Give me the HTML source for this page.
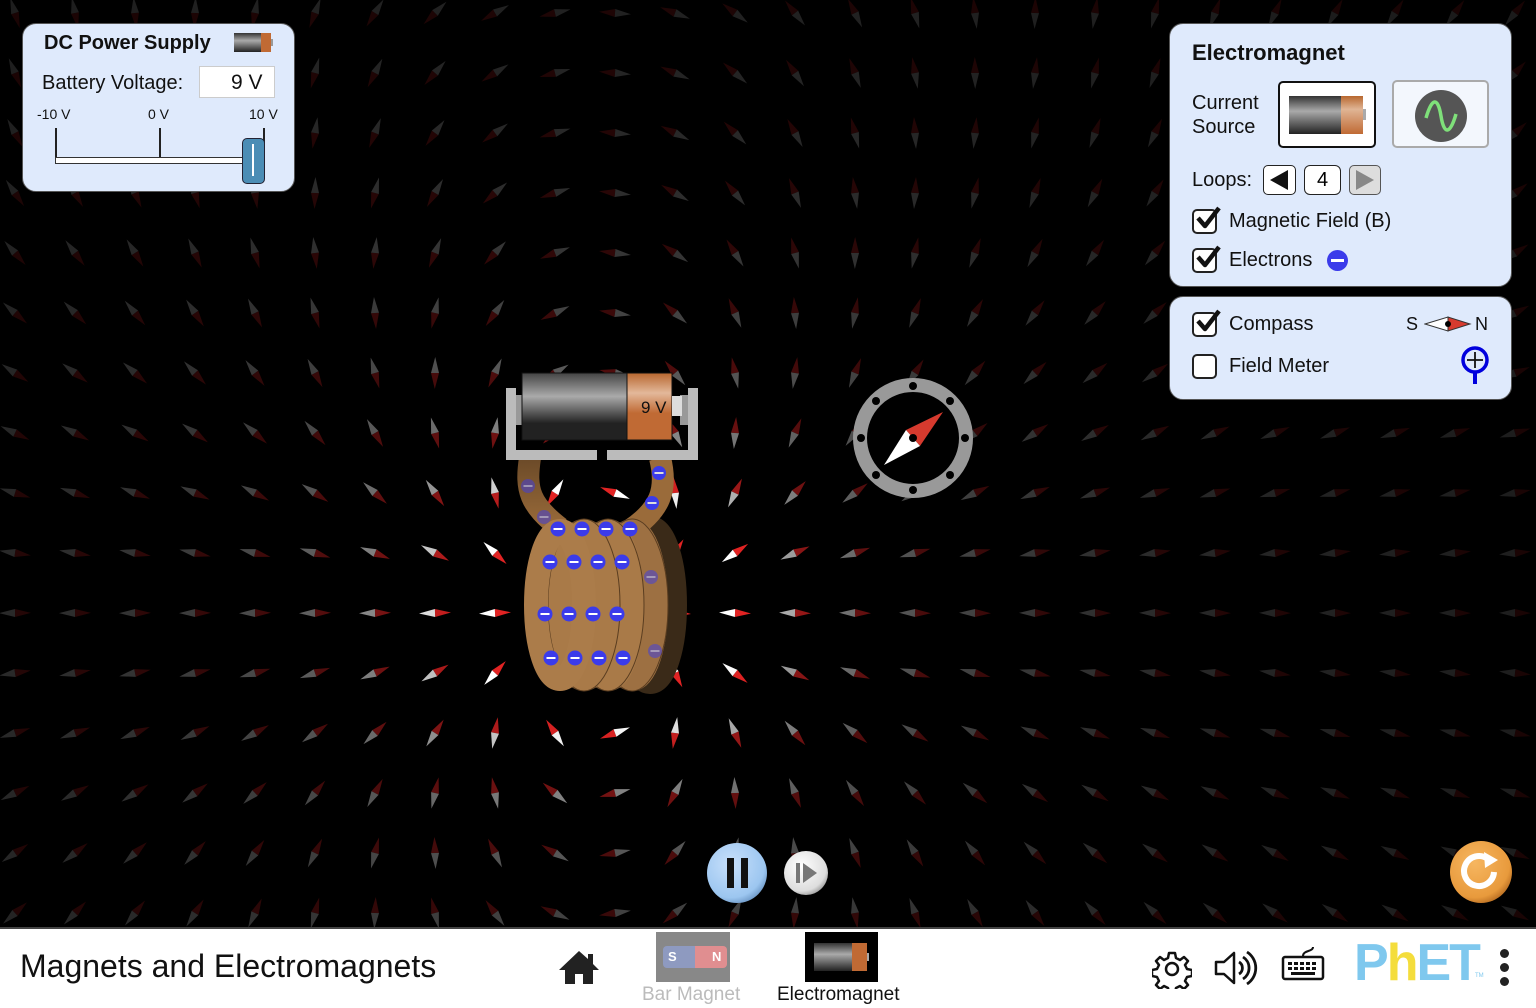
<!DOCTYPE html>
<html><head><meta charset="utf-8">
<style>
*{margin:0;padding:0;box-sizing:border-box}
body{width:1536px;height:1008px;overflow:hidden;background:#000;font-family:"Liberation Sans",Arial,sans-serif;position:relative}
.panel{position:absolute;background:#dfeafc;border:1.5px solid #555;border-radius:14px}
.t{position:absolute;color:#111;white-space:nowrap}
.cb{position:absolute;width:25px;height:25px;border:2px solid #222;border-radius:5px;background:#fff}
.ck{position:absolute;width:30px;height:28px}
#bar{position:absolute;left:0;top:927px;width:1536px;height:81px;background:#fff;border-top:2px solid #444}
</style></head><body>
<svg id="field" width="1536" height="927" style="position:absolute;left:0;top:0"></svg>

<svg width="1536" height="927" style="position:absolute;left:0;top:0">
<defs>
<linearGradient id="bat" x1="0" y1="0" x2="0" y2="1"><stop offset="0" stop-color="#444"/><stop offset=".35" stop-color="#aaa"/><stop offset=".75" stop-color="#222"/><stop offset="1" stop-color="#222"/></linearGradient>
<linearGradient id="org" x1="0" y1="0" x2="0" y2="1"><stop offset="0" stop-color="#b8672f"/><stop offset=".3" stop-color="#e3b89a"/><stop offset=".6" stop-color="#c06a34"/><stop offset="1" stop-color="#c06a34"/></linearGradient>
<linearGradient id="lead" x1="0" y1="0" x2="0" y2="1"><stop offset="0" stop-color="#6b4a28"/><stop offset="1" stop-color="#9a6b3a"/></linearGradient>
</defs>
<ellipse cx="650" cy="605" rx="24" ry="76" fill="none" stroke="#3a2a18" stroke-width="26"/>
<path d="M530 458 C525 490 530 505 560 528" fill="none" stroke="url(#lead)" stroke-width="22"/>
<path d="M660 458 C668 490 660 510 630 530" fill="none" stroke="#9a6b3a" stroke-width="22"/>
<g stroke-width="24" fill="none">
<ellipse cx="632" cy="605" rx="24" ry="74" stroke="#9d7042"/>
<ellipse cx="632" cy="605" rx="36" ry="86" stroke="#5a3d20" stroke-width="1"/>
<ellipse cx="608" cy="605" rx="24" ry="74" stroke="#a97a48"/>
<ellipse cx="608" cy="605" rx="36" ry="86" stroke="#5a3d20" stroke-width="1"/>
<ellipse cx="584" cy="605" rx="24" ry="74" stroke="#a97a48"/>
<ellipse cx="584" cy="605" rx="36" ry="86" stroke="#5a3d20" stroke-width="1"/>
<ellipse cx="560" cy="605" rx="24" ry="74" stroke="#ab7c4a"/>
</g>
<path d="M506 388 h10 v62 h81 v10 h-91z M698 388 h-10 v62 h-81 v10 h91z" fill="#bbb"/>
<rect x="516" y="395" width="8" height="30" fill="#999"/>
<rect x="680" y="395" width="8" height="30" fill="#999"/>
<rect x="522" y="373" width="105" height="67" fill="url(#bat)" stroke="#111"/>
<rect x="627" y="373" width="45" height="67" fill="url(#org)" stroke="#111"/>
<rect x="672" y="396" width="10" height="20" fill="#ddd"/>
<text x="641" y="413" font-family="Liberation Sans" font-size="17" fill="#111">9 V</text>
<g id="el"></g>
<circle cx="913" cy="438" r="53" fill="none" stroke="#999" stroke-width="14"/>
<g fill="#000"><circle cx="913" cy="386" r="4"/><circle cx="913" cy="490" r="4"/><circle cx="861" cy="438" r="4"/><circle cx="965" cy="438" r="4"/><circle cx="876" cy="401" r="4"/><circle cx="950" cy="401" r="4"/><circle cx="876" cy="475" r="4"/><circle cx="950" cy="475" r="4"/></g>
<polygon points="943,412 906,430 920,446" fill="#d63a2e"/>
<polygon points="884,465 906,430 920,446" fill="#fff"/>
<circle cx="913" cy="438" r="4" fill="#000"/>
<defs><radialGradient id="pb" cx=".4" cy=".35" r=".7"><stop offset="0" stop-color="#c8e0fb"/><stop offset=".8" stop-color="#9cc6f0"/><stop offset="1" stop-color="#6a95c4"/></radialGradient>
<radialGradient id="sb" cx=".4" cy=".35" r=".7"><stop offset="0" stop-color="#fff"/><stop offset=".8" stop-color="#ddd"/><stop offset="1" stop-color="#999"/></radialGradient>
<radialGradient id="rb" cx=".4" cy=".35" r=".7"><stop offset="0" stop-color="#f6b660"/><stop offset=".8" stop-color="#e89a3c"/><stop offset="1" stop-color="#b56a20"/></radialGradient></defs>
<circle cx="737" cy="873" r="30" fill="url(#pb)"/>
<rect x="727" y="858" width="7" height="30" fill="#111"/><rect x="741" y="858" width="7" height="30" fill="#111"/>
<circle cx="806" cy="873" r="22" fill="url(#sb)"/>
<rect x="796" y="863" width="4" height="20" fill="#777"/><polygon points="803,863 817,873 803,883" fill="#777"/>
<circle cx="1481" cy="872" r="31" fill="url(#rb)"/>
<path d="M1488 859 A15 15 0 1 0 1494 872" fill="none" stroke="#fff" stroke-width="6"/>
<polygon points="1484,852 1498,860 1485,868" fill="#fff"/>
</svg>

<div class="panel" style="left:22px;top:23px;width:273px;height:169px">
<div class="t" style="left:21px;top:8px;font-size:20px;font-weight:bold">DC Power Supply</div>
<svg style="position:absolute;left:211px;top:9px" width="40" height="20"><defs><linearGradient id="b2" x1="0" y1="0" x2="0" y2="1"><stop offset="0" stop-color="#333"/><stop offset=".4" stop-color="#aaa"/><stop offset="1" stop-color="#222"/></linearGradient></defs><rect x="0" y="0" width="27" height="19" fill="url(#b2)"/><rect x="27" y="0" width="10" height="19" fill="#c06a34"/><rect x="37" y="6" width="2" height="7" fill="#999"/></svg>
<div class="t" style="left:19px;top:48px;font-size:20px">Battery Voltage:</div>
<div style="position:absolute;left:176px;top:42px;width:76px;height:32px;background:#fff;border:1px solid #ccc"></div>
<div class="t" style="left:208px;top:47px;font-size:21px">9 V</div>
<div class="t" style="left:14px;top:82px;font-size:14px">-10 V</div>
<div class="t" style="left:125px;top:82px;font-size:14px">0 V</div>
<div class="t" style="left:226px;top:82px;font-size:14px">10 V</div>
<div style="position:absolute;left:32px;top:104px;width:1.5px;height:34px;background:#222"></div>
<div style="position:absolute;left:136px;top:104px;width:1.5px;height:30px;background:#222"></div>
<div style="position:absolute;left:240px;top:104px;width:1.5px;height:30px;background:#222"></div>
<div style="position:absolute;left:32px;top:133px;width:196px;height:7px;background:#fff;border:1.5px solid #333"></div>
<div style="position:absolute;left:219px;top:114px;width:23px;height:46px;background:#4b8db5;border:1.5px solid #223;border-radius:5px"><div style="position:absolute;left:9px;top:5px;width:2px;height:32px;background:#fff"></div></div>
</div>

<div class="panel" style="left:1169px;top:23px;width:343px;height:264px">
<div class="t" style="left:22px;top:16px;font-size:22px;font-weight:bold">Electromagnet</div>
<div class="t" style="left:22px;top:67px;font-size:20px;line-height:24px">Current<br>Source</div>
<div style="position:absolute;left:108px;top:57px;width:98px;height:67px;background:#fff;border:2.5px solid #111;border-radius:5px">
<svg style="position:absolute;left:8px;top:12px" width="80" height="40"><defs><linearGradient id="b3" x1="0" y1="0" x2="0" y2="1"><stop offset="0" stop-color="#333"/><stop offset=".4" stop-color="#aaa"/><stop offset="1" stop-color="#222"/></linearGradient><linearGradient id="o3" x1="0" y1="0" x2="0" y2="1"><stop offset="0" stop-color="#b8672f"/><stop offset=".35" stop-color="#e0b595"/><stop offset="1" stop-color="#c06a34"/></linearGradient></defs><rect x="1" y="1" width="52" height="38" fill="url(#b3)"/><rect x="53" y="1" width="22" height="38" fill="url(#o3)"/><rect x="75" y="14" width="3" height="11" fill="#aaa"/></svg></div>
<div style="position:absolute;left:222px;top:56px;width:97px;height:68px;background:#f3f7fd;border:2px solid #aaa;border-radius:5px">
<svg style="position:absolute;left:20px;top:7px" width="54" height="54"><circle cx="27" cy="27" r="26" fill="#555"/><path d="M12 29 C18 8 24 8 27 27 S36 46 42 25" fill="none" stroke="#7fe07a" stroke-width="3.5"/></svg></div>
<div class="t" style="left:22px;top:145px;font-size:20px">Loops:</div>
<div style="position:absolute;left:93px;top:141px;width:33px;height:30px;background:#fff;border:1.5px solid #222;border-radius:5px"><svg width="30" height="28"><polygon points="6,14 24,4 24,24" fill="#111"/></svg></div>
<div style="position:absolute;left:134px;top:141px;width:37px;height:30px;background:#fff;border:1.5px solid #222;border-radius:6px;text-align:center;font-size:20px;line-height:28px">4</div>
<div style="position:absolute;left:179px;top:141px;width:32px;height:30px;background:#ddd;border:1.5px solid #555;border-radius:5px"><svg width="30" height="28"><polygon points="24,14 6,4 6,24" fill="#888"/></svg></div>
<div class="cb" style="left:22px;top:185px"></div><svg class="ck" style="left:24px;top:180px" viewBox="0 0 30 28"><path d="M4 14 L11 22 L25 4" fill="none" stroke="#111" stroke-width="4.5" stroke-linejoin="round"/></svg>
<div class="t" style="left:59px;top:186px;font-size:20px">Magnetic Field (B)</div>
<div class="cb" style="left:22px;top:224px"></div><svg class="ck" style="left:24px;top:219px" viewBox="0 0 30 28"><path d="M4 14 L11 22 L25 4" fill="none" stroke="#111" stroke-width="4.5" stroke-linejoin="round"/></svg>
<div class="t" style="left:59px;top:225px;font-size:20px">Electrons</div>
<div style="position:absolute;left:157px;top:226px;width:21px;height:21px;border-radius:50%;background:#3b3bea"><div style="position:absolute;left:4px;top:9px;width:13px;height:3px;background:#fff"></div></div>
</div>

<div class="panel" style="left:1169px;top:296px;width:343px;height:104px">
<div class="cb" style="left:22px;top:15px"></div><svg class="ck" style="left:24px;top:10px" viewBox="0 0 30 28"><path d="M4 14 L11 22 L25 4" fill="none" stroke="#111" stroke-width="4.5" stroke-linejoin="round"/></svg>
<div class="t" style="left:59px;top:16px;font-size:20px">Compass</div>
<div class="t" style="left:236px;top:17px;font-size:18px">S</div>
<svg style="position:absolute;left:254px;top:19px" width="48" height="16"><polygon points="1,8 24,1 24,15" fill="#fff" stroke="#333"/><polygon points="46,8 24,1 24,15" fill="#d63a2e" stroke="#333"/><circle cx="24" cy="8" r="3" fill="#000"/></svg>
<div class="t" style="left:305px;top:17px;font-size:18px">N</div>
<div class="cb" style="left:22px;top:57px"></div>
<div class="t" style="left:59px;top:58px;font-size:20px">Field Meter</div>
<svg style="position:absolute;left:290px;top:48px" width="30" height="42"><circle cx="15" cy="15" r="12" fill="none" stroke="#0000dd" stroke-width="3.5"/><path d="M15 7v16M7 15h16" stroke="#111" stroke-width="1.8"/><path d="M15 27v12" stroke="#0000dd" stroke-width="4"/></svg>
</div>

<div id="bar">
<div class="t" style="left:20px;top:19px;font-size:32px">Magnets and Electromagnets</div>
<svg style="position:absolute;left:557px;top:19px" width="44" height="38"><path d="M22 3 L2 22 h6 v14 h10 v-10 h8 v10 h10 v-14 h6 L36 16 V6 h-5 v5z" fill="#222"/></svg>
<div style="position:absolute;left:656px;top:3px;width:74px;height:50px;background:#888"><div style="position:absolute;left:7px;top:14px;width:64px;height:22px;border-radius:4px;background:linear-gradient(90deg,#8e9ac0 50%,#e08e90 50%)"></div><div class="t" style="left:12px;top:17px;font-size:13px;font-weight:bold;color:#fff">S</div><div class="t" style="left:56px;top:17px;font-size:13px;font-weight:bold;color:#fff">N</div></div>
<div class="t" style="left:642px;top:55px;font-size:19px;color:#bbb">Bar Magnet</div>
<div style="position:absolute;left:805px;top:3px;width:73px;height:50px;background:#000"><svg style="position:absolute;left:9px;top:11px" width="56" height="30"><defs><linearGradient id="b4" x1="0" y1="0" x2="0" y2="1"><stop offset="0" stop-color="#333"/><stop offset=".4" stop-color="#aaa"/><stop offset="1" stop-color="#222"/></linearGradient></defs><rect x="0" y="0" width="38" height="28" fill="url(#b4)"/><rect x="38" y="0" width="15" height="28" fill="#c06a34"/><rect x="53" y="10" width="2" height="8" fill="#aaa"/></svg></div>
<div class="t" style="left:777px;top:55px;font-size:19px">Electromagnet</div>
<svg style="position:absolute;left:1152px;top:20px" width="40" height="40"><g transform="translate(20 20)"><path d="M-3-16h6l1 5 4 2 4-3 4 4-3 4 2 4 5 1v6l-5 1-2 4 3 4-4 4-4-3-4 2-1 5h-6l-1-5-4-2-4 3-4-4 3-4-2-4-5-1v-6l5-1 2-4-3-4 4-4 4 3 4-2z" fill="none" stroke="#111" stroke-width="2.5" stroke-linejoin="round"/><circle r="6" fill="none" stroke="#111" stroke-width="2.5"/></g></svg>
<svg style="position:absolute;left:1213px;top:19px" width="46" height="40"><path d="M3 14h8l10-9v30l-10-9H3z" fill="none" stroke="#111" stroke-width="2.5" stroke-linejoin="round"/><path d="M26 14a7 7 0 0 1 0 12M30 9a13 13 0 0 1 0 22M34 4a19 19 0 0 1 0 32" fill="none" stroke="#111" stroke-width="2.8"/></svg>
<svg style="position:absolute;left:1281px;top:16px" width="46" height="40"><path d="M32 2c0 5-10 3-10 9" fill="none" stroke="#111" stroke-width="2"/><rect x="2" y="12" width="40" height="22" rx="2" fill="none" stroke="#111" stroke-width="2.5"/><g fill="#111"><rect x="7" y="17" width="4" height="3"/><rect x="13" y="17" width="4" height="3"/><rect x="19" y="17" width="4" height="3"/><rect x="25" y="17" width="4" height="3"/><rect x="31" y="17" width="4" height="3"/><rect x="7" y="22" width="4" height="3"/><rect x="13" y="22" width="4" height="3"/><rect x="19" y="22" width="4" height="3"/><rect x="25" y="22" width="4" height="3"/><rect x="31" y="22" width="4" height="3"/><rect x="10" y="27" width="24" height="3"/></g></svg>
<div class="t" style="left:1354px;top:4px;font-size:52px;font-weight:bold;color:#7fc8ee;letter-spacing:-2px">P<span style="color:#f4dd3c">h</span>ET</div>
<div class="t" style="left:1475px;top:44px;font-size:6px;color:#7fc8ee">TM</div>
<div style="position:absolute;left:1500px;top:20px;width:9px;height:9px;border-radius:50%;background:#222"></div>
<div style="position:absolute;left:1500px;top:34px;width:9px;height:9px;border-radius:50%;background:#222"></div>
<div style="position:absolute;left:1500px;top:48px;width:9px;height:9px;border-radius:50%;background:#222"></div>
</div>

<script>
var f=document.getElementById("field"),h="";
var cx=600,cy=610;
for(var j=0;j<16;j++)for(var i=0;i<26;i++){
 var x=15+60*i,y=13+60*j,dx=x-cx,dy=y-cy,r=Math.sqrt(dx*dx+dy*dy);if(r<5)r=5;
 var ux=dx/r,uy=dy/r,c=ux;var bx=3*c*ux-1,by=3*c*uy;
 if(Math.abs(dx)<70&&Math.abs(dy)<95){bx=1;by=0;}
 var a=Math.atan2(by,bx)*180/Math.PI;
 var fm=Math.sqrt(1+3*c*c)/Math.pow(r/120,3);
 var b=Math.min(1,0.08+0.92*Math.min(1,Math.pow(fm,0.6)));
 var n="rgb("+Math.round(225*b)+","+Math.round(35*b)+","+Math.round(35*b)+")";
 var s="rgb("+Math.round(255*b)+","+Math.round(255*b)+","+Math.round(255*b)+")";
 h+='<g transform="translate('+x+' '+y+') rotate('+a.toFixed(1)+')"><polygon points="0,-4 16,0 0,4" fill="'+n+'"/><polygon points="0,-4 -16,0 0,4" fill="'+s+'"/></g>';
}
f.innerHTML=h;
var e=[[558,529],[582,529],[606,529],[630,529],[550,562],[574,562],[598,562],[622,562],[545,614],[569,614],[593,614],[617,614],[551,658],[575,658],[599,658],[623,658]];
var d=[[528,486,.5],[544,517,.5],[659,473,1],[652,503,1],[651,577,.5],[655,651,.5]];
var g="";
d.forEach(function(p){g+='<circle cx="'+p[0]+'" cy="'+p[1]+'" r="7" fill="#3b3bea" opacity="'+p[2]+'"/><rect x="'+(p[0]-4.5)+'" y="'+(p[1]-1)+'" width="9" height="2" fill="#ddd" opacity="'+p[2]+'"/>';});
e.forEach(function(p){g+='<circle cx="'+p[0]+'" cy="'+p[1]+'" r="7.5" fill="#3b3bea"/><rect x="'+(p[0]-4.5)+'" y="'+(p[1]-1)+'" width="9" height="2" fill="#fff"/>';});
document.getElementById("el").innerHTML=g;
</script>
</body></html>
